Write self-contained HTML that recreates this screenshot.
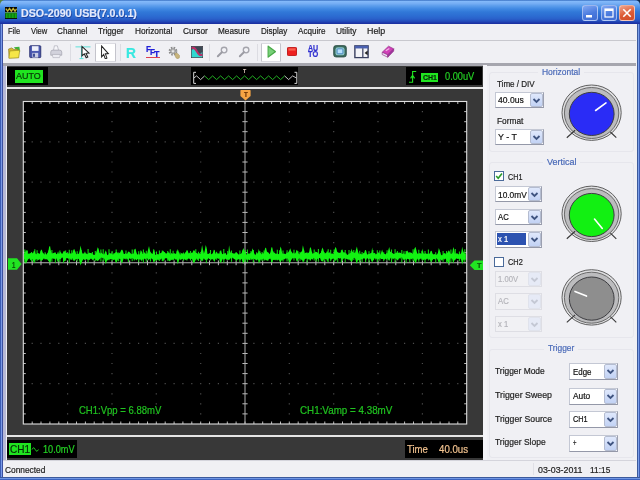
<!DOCTYPE html>
<html><head><meta charset="utf-8"><title>DSO-2090 USB(7.0.0.1)</title>
<style>
*{box-sizing:border-box;margin:0;padding:0}
html,body{width:640px;height:480px;overflow:hidden;background:#f0f0f4}
body{font-family:"Liberation Sans",sans-serif;font-size:9px;color:#222;position:relative;filter:blur(0.45px)}
.abs{position:absolute}
.t{position:absolute;white-space:pre;line-height:12px;display:block;transform-origin:0 0;-webkit-text-stroke:0.2px currentColor}
#frame{position:absolute;left:0;top:10px;width:640px;height:470px;background:#3c6dd8}
#title{position:absolute;left:0;top:0;width:640px;height:24px;border-radius:5px 5px 0 0;
 background:linear-gradient(to bottom,#2a62b8 0,#84bafa 1.2px,#76aef4 3.5px,#5a9cec 6px,#4088e2 9px,#3178d8 12px,#2c6cd2 16px,#2a60ca 19px,#2248b8 21.5px,#1c34a8 23px,#1a2e9c 24px)}
.wb{position:absolute;top:5px;width:16px;height:16px;border:1px solid rgba(230,238,255,0.55);border-radius:3px;background:linear-gradient(160deg,#82a8f2,#4a7ade 55%,#3f6cd2)}
.wb.close{background:linear-gradient(160deg,#f0a48c,#dc5a34 55%,#d04c28);border-color:rgba(255,235,225,0.6)}
.wb svg{position:absolute;left:0;top:0}
#client{position:absolute;left:2.9px;top:24px;width:633.9px;height:452.8px;background:#f0f0f4}
.hl{position:absolute;background:#fff;border:1px solid #c4c4cc;border-top-color:#dcdce2;border-bottom-color:#dcdce2;border-radius:1px}
.sep{position:absolute;width:1px;background:#dcdce2}
.dark{position:absolute;background:#383838}
.blk{position:absolute;background:#000}
.grp{position:absolute;border:1px solid #e6e6ec;border-radius:3px}
.combo{position:absolute;background:#fff;border:1px solid #c4c8d4;border-bottom-color:#9498a8;border-right-color:#9ca0b0}
.combo .cb{position:absolute;right:0;top:0;bottom:0;width:13px;background:linear-gradient(#dfe8fc,#c2d2f4);border:1px solid #b4bcd0;border-radius:2px}
.combo .cb svg{position:absolute;left:1px;top:4px}
.combo .cb path{stroke:#3f5480}
.combo.dis{background:#f1f1f4;border-color:#dedee4}
.combo.dis .cb{background:#e6eaf6;border-color:#e0e3ec}
.combo.dis .cb path{stroke:#c4c8d4}
.chk{position:absolute;width:10px;height:10px;border:1px solid #4a6a9a;background:#fff}
</style></head><body>
<div class="abs" style="left:0;top:0;width:8px;height:8px;background:#58803a"></div>
<div class="abs" style="left:632px;top:0;width:8px;height:8px;background:#0c2c54"></div>
<div id="frame"></div>
<div class="abs" style="left:0;top:20px;width:3px;height:460px;background:linear-gradient(to right,#3c5cb4 0,#3c5cb4 0.6px,#7a9ae8 0.8px,#7a9ae8 1.8px,#3c50a0 2px,#3c50a0 3px)"></div>
<div class="abs" style="left:636.8px;top:20px;width:3.2px;height:460px;background:linear-gradient(to right,#3c5a9c 0,#3c5a9c 0.9px,#7a9ee8 1.1px,#7a9ee8 2.3px,#3c5cb4 2.5px,#3c5cb4 3.2px)"></div>
<div class="abs" style="left:0;top:476.8px;width:640px;height:3.2px;background:linear-gradient(to bottom,#3c5a9c 0,#3c5a9c 0.9px,#7096e4 1.1px,#7096e4 2.3px,#3c64c0 2.5px,#3c64c0 3.2px)"></div>
<div id="title">
<svg class="abs" style="left:5px;top:6.8px" width="12.3" height="12" viewBox="0 0 12 12" preserveAspectRatio="none"><rect width="12" height="12" fill="#060606"/><path d="M0.8 1.6 L2.6 4.2 L4.4 1.4 L6.2 4.2 L8 1.4 L9.8 4.2 L11.3 1.8" stroke="#c4b430" stroke-width="1.3" fill="none"/><rect x="0" y="5.3" width="12" height="0.9" fill="#6cc48c"/><rect x="0.4" y="6.2" width="11.2" height="4.9" fill="#14a414"/><path d="M3 6.6V10.8M6 6.6V10.8M9 6.6V10.8" stroke="#0a6a0a" stroke-width="0.9"/></svg>
<span class="t" style="left:21.00px;top:7.33px;font-size:10.6px;transform:scaleX(1.0095);color:#e4eafc;font-weight:bold;text-shadow:0.7px 0.7px 0 #1d3f9a;">DSO-2090 USB(7.0.0.1)</span>
<div class="wb" style="left:582px"><svg width="14" height="14"><rect x="3" y="9" width="6" height="2.5" fill="#fff"/></svg></div>
<div class="wb" style="left:601px"><svg width="14" height="14"><rect x="3" y="3" width="8" height="8" fill="none" stroke="#fff" stroke-width="1.2"/><rect x="3" y="3" width="8" height="2" fill="#fff"/></svg></div>
<div class="wb close" style="left:619px"><svg width="14" height="14"><path d="M3.3 3.3 L10.7 10.7 M10.7 3.3 L3.3 10.7" stroke="#fff" stroke-width="1.6"/></svg></div>
</div>
<div id="client"></div>

<span class="t" style="left:7.80px;top:25.41px;font-size:9.2px;transform:scaleX(0.8169);color:#1c1c1c;">File</span>
<span class="t" style="left:30.50px;top:25.41px;font-size:9.2px;transform:scaleX(0.8241);color:#1c1c1c;">View</span>
<span class="t" style="left:57.00px;top:25.41px;font-size:9.2px;transform:scaleX(0.8871);color:#1c1c1c;">Channel</span>
<span class="t" style="left:98.10px;top:25.41px;font-size:9.2px;transform:scaleX(0.8960);color:#1c1c1c;">Trigger</span>
<span class="t" style="left:135.30px;top:25.41px;font-size:9.2px;transform:scaleX(0.9034);color:#1c1c1c;">Horizontal</span>
<span class="t" style="left:182.80px;top:25.41px;font-size:9.2px;transform:scaleX(0.9022);color:#1c1c1c;">Cursor</span>
<span class="t" style="left:218.30px;top:25.41px;font-size:9.2px;transform:scaleX(0.8914);color:#1c1c1c;">Measure</span>
<span class="t" style="left:260.50px;top:25.41px;font-size:9.2px;transform:scaleX(0.8749);color:#1c1c1c;">Display</span>
<span class="t" style="left:298.00px;top:25.41px;font-size:9.2px;transform:scaleX(0.8817);color:#1c1c1c;">Acquire</span>
<span class="t" style="left:336.30px;top:25.41px;font-size:9.2px;transform:scaleX(0.9114);color:#1c1c1c;">Utility</span>
<span class="t" style="left:366.70px;top:25.41px;font-size:9.2px;transform:scaleX(0.9627);color:#1c1c1c;">Help</span>

<div class="abs" style="left:3px;top:40px;width:633px;height:1px;background:#c8c8ce"></div>
<div class="abs" style="left:3px;top:63.4px;width:633px;height:2.2px;background:#a6a6ae"></div>
<div class="hl" style="left:95px;top:42.6px;width:20.5px;height:19.6px"></div>
<div class="hl" style="left:260.5px;top:42.6px;width:20.5px;height:19.6px"></div>
<div class="sep" style="left:70px;top:44px;height:17px"></div>
<div class="sep" style="left:119.5px;top:44px;height:17px"></div>
<div class="sep" style="left:209px;top:44px;height:17px"></div>
<div class="sep" style="left:257px;top:44px;height:17px"></div>

<svg class="abs" style="left:8px;top:45.5px" width="12.5" height="13" viewBox="0 0 17 17" preserveAspectRatio="none"><path d="M8 1.5 L15.5 1 L16.5 8 L12 6 Z" fill="#3cb43c"/><path d="M0.8 4 L5 2.5 L8 4.5 L13 4 L14 15 L1.5 15.5 Z" fill="#d8b830" stroke="#8a7a20" stroke-width="0.9"/><path d="M1.2 16 L2.5 6.5 L16 5.5 L14.5 15.5 Z" fill="#f6e648" stroke="#a09020" stroke-width="0.9"/></svg>
<svg class="abs" style="left:29.3px;top:45.3px" width="12.5" height="13.4" viewBox="0 0 17 17" preserveAspectRatio="none"><rect x="1" y="1" width="15" height="15" rx="1" fill="#4a58b0" stroke="#2a3070" stroke-width="1.2"/><rect x="4" y="1.5" width="9" height="6" fill="#eef0fa"/><rect x="4.5" y="10" width="8" height="6" fill="#c8cce4"/><rect x="5.5" y="11" width="2.6" height="4" fill="#3a4890"/></svg>
<svg class="abs" style="left:50px;top:45.3px" width="12.5" height="13.4" viewBox="0 0 17 17" preserveAspectRatio="none"><path d="M6 1 L10 1 L12 8 L4.5 8 Z" fill="#f6f6fa" stroke="#a4a4b0" stroke-width="0.8"/><path d="M1 9 Q1 6.5 4 6.5 L13 6.5 Q16 6.5 16 9 L16 13 L1 13 Z" fill="#d2d2dc" stroke="#9a9aa6" stroke-width="0.8"/><path d="M3 12 L14 12 L13 16 L4 16 Z" fill="#ececf2" stroke="#a4a4b0" stroke-width="0.7"/></svg>
<svg class="abs" style="left:75px;top:45px" width="16" height="15" viewBox="0 0 16 16" preserveAspectRatio="none"><path d="M0.5 2 L15.5 2 M6.5 2 L6.5 14.5 M4.5 14.5 L8.5 14.5" stroke="#58e0d8" stroke-width="1" fill="none"/><path d="M7 1.5 L7 11.5 L9.3 9.5 L11.2 13.6 L12.8 12.8 L11 8.9 L14 8.6 Z" fill="#fff" stroke="#222" stroke-width="1.1"/></svg>
<svg class="abs" style="left:100px;top:45px" width="11" height="14" viewBox="0 0 14 14" preserveAspectRatio="none"><path d="M2 1 L2 12 L4.7 9.6 L6.8 14 L8.8 13 L6.8 8.9 L10.5 8.6 Z" fill="#fff" stroke="#222" stroke-width="1.2"/></svg>
<span class="t" style="left:125.90px;top:46.67px;font-size:14.8px;transform:scaleX(0.9291);color:#38e8e0;font-weight:bold;">R</span>
<span class="t" style="left:146.20px;top:42.94px;font-size:9.4px;transform:scaleX(0.8720);color:#2020d8;font-weight:bold;">F</span>
<span class="t" style="left:150.40px;top:45.94px;font-size:9.4px;transform:scaleX(0.8720);color:#2020d8;font-weight:bold;">F</span>
<span class="t" style="left:154.20px;top:48.28px;font-size:9.0px;transform:scaleX(0.9836);color:#2020d8;font-weight:bold;">T</span>
<div class="abs" style="left:146px;top:57px;width:13.5px;height:1.4px;background:#e04050"></div>
<svg class="abs" style="left:168px;top:45.5px" width="13" height="13.5" viewBox="0 0 17 17" preserveAspectRatio="none"><circle cx="6.5" cy="6.5" r="4.4" fill="none" stroke="#8c8c8c" stroke-width="2.6" stroke-dasharray="2 1.5"/><circle cx="6.5" cy="6.5" r="3" fill="#c4c4c4" stroke="#7a7a7a" stroke-width="0.8"/><circle cx="6.5" cy="6.5" r="1.2" fill="#eeeef2"/><path d="M9 9 Q13 8 15 12 Q16 16 12 16 Q9 15 9 9Z" fill="#c8b47c" stroke="#a09060" stroke-width="0.6"/></svg>
<svg class="abs" style="left:190.5px;top:46.3px" width="12" height="12" viewBox="0 0 17 17" preserveAspectRatio="none"><rect x="0.5" y="0.5" width="16" height="16" fill="#3c4854" stroke="#3a3a44" stroke-width="1"/><path d="M1 6 Q5 1 8.5 8 T16 8 L16 16 L1 16 Z" fill="#30d8d0"/><path d="M1 3 Q5 1 8.5 8 T16 12" stroke="#b83068" stroke-width="3" fill="none"/></svg>
<svg class="abs" style="left:216px;top:45.7px" width="12.5" height="12.5" viewBox="0 0 17 17" preserveAspectRatio="none"><circle cx="11" cy="5.5" r="3.8" fill="#f2f2f6" stroke="#a4a4ac" stroke-width="1.8"/><path d="M8 8.5 L2.5 14" stroke="#9c9ca4" stroke-width="2.6" stroke-linecap="round"/></svg>
<svg class="abs" style="left:237.5px;top:45.7px" width="12.5" height="12.5" viewBox="0 0 17 17" preserveAspectRatio="none"><circle cx="11" cy="5.5" r="3.8" fill="#f2f2f6" stroke="#a4a4ac" stroke-width="1.8"/><path d="M8 8.5 L2.5 14" stroke="#9c9ca4" stroke-width="2.6" stroke-linecap="round"/></svg>
<svg class="abs" style="left:266.5px;top:45.3px" width="9.5" height="13.3" viewBox="0 0 14 14" preserveAspectRatio="none"><path d="M1.5 1.2 L12.5 7 L1.5 12.8 Z" fill="#78d078" stroke="#48a848" stroke-width="1.4" stroke-linejoin="round"/></svg>
<svg class="abs" style="left:287px;top:47px" width="10" height="9" viewBox="0 0 10 10" preserveAspectRatio="none"><rect x="0.5" y="0.5" width="9" height="9" rx="0.8" fill="#ee2020" stroke="#c01818" stroke-width="1"/><rect x="1.5" y="1.5" width="7" height="2.5" fill="#f86050"/></svg>
<span class="t" style="left:308.20px;top:42.86px;font-size:8.2px;transform:scaleX(0.8608);color:#3030d0;font-weight:bold;">AU</span>
<span class="t" style="left:308.20px;top:49.36px;font-size:8.2px;transform:scaleX(0.9080);color:#3030d0;font-weight:bold;">TO</span>
<svg class="abs" style="left:333px;top:45.3px" width="14" height="12.6" viewBox="0 0 17 17" preserveAspectRatio="none"><rect x="0.8" y="0.8" width="15.4" height="15.4" rx="3" fill="#3a6a5c" stroke="#2a4a44" stroke-width="1"/><rect x="3" y="3" width="11" height="11" rx="3" fill="#8cc4c8"/><rect x="5" y="5.2" width="7" height="6.6" rx="1" fill="#b8e0fc" stroke="#3a7ab8" stroke-width="1"/></svg>
<svg class="abs" style="left:354px;top:45.2px" width="15" height="13.4" viewBox="0 0 17 17" preserveAspectRatio="none"><rect x="1" y="1" width="15" height="15" fill="#f4f4f8" stroke="#3a4060" stroke-width="1.6"/><rect x="1" y="1" width="15" height="3.4" fill="#4a60b0"/><path d="M10 4 L10 16" stroke="#3a4060" stroke-width="1.4"/><path d="M15.5 7 L12 10 L15.5 13Z" fill="#222"/></svg>
<svg class="abs" style="left:381px;top:45.3px" width="13.5" height="13" viewBox="0 0 17 17" preserveAspectRatio="none"><path d="M1.5 9.5 L9.5 1.5 L16 5 L8.5 13 Z" fill="#d040b8" stroke="#8a2880" stroke-width="0.8"/><path d="M1.5 9.5 L1.5 12.5 L8.5 16 L8.5 13 Z" fill="#ece4f4" stroke="#8a2880" stroke-width="0.8"/><path d="M8.5 13 L16 5 L16 8 L8.5 16 Z" fill="#a030a0" stroke="#8a2880" stroke-width="0.8"/><path d="M6 7.5 L10.5 4.5" stroke="#f4b8e8" stroke-width="1.4"/></svg>

<div class="abs" style="left:2.9px;top:65.6px;width:3.6px;height:394px;background:#b6b8d6"></div>
<div class="abs" style="left:483px;top:65px;width:4px;height:395px;background:#f4f4f8"></div>
<div class="dark" style="left:6.5px;top:66px;width:476.5px;height:393.5px"></div>
<div class="abs" style="left:6.5px;top:87.1px;width:476.5px;height:1.8px;background:#e6e6e6"></div>
<div class="abs" style="left:6.5px;top:435.4px;width:476.5px;height:1.8px;background:#e6e6e6"></div>
<div class="blk" style="left:7px;top:67px;width:41px;height:18px"></div>
<div class="abs" style="left:15px;top:70px;width:28px;height:12.5px;background:#20e420"></div>
<div class="blk" style="left:191.3px;top:66.8px;width:107.2px;height:18.2px"></div>
<div class="blk" style="left:406px;top:67.3px;width:76px;height:18px"></div>
<div class="abs" style="left:421px;top:73px;width:17px;height:9px;background:#20e420"></div>
<div class="blk" style="left:6.5px;top:439.8px;width:70.5px;height:17.8px"></div>
<div class="abs" style="left:9px;top:442.8px;width:21.8px;height:12.3px;background:#20e420"></div>
<div class="blk" style="left:405px;top:439.8px;width:77.6px;height:17.8px"></div>

<span class="t" style="left:16.30px;top:70.37px;font-size:9.9px;transform:scaleX(0.9076);color:#083408;">AUTO</span>
<span class="t" style="left:422.50px;top:72.10px;font-size:7.5px;transform:scaleX(0.9333);color:#062806;font-weight:bold;">CH1</span>
<span class="t" style="left:444.60px;top:71.27px;font-size:10.2px;transform:scaleX(0.9062);color:#24d024;">0.00uV</span>
<span class="t" style="left:10.20px;top:443.33px;font-size:10.6px;transform:scaleX(0.9481);color:#062c06;">CH1</span>
<span class="t" style="left:42.60px;top:443.33px;font-size:10.6px;transform:scaleX(0.8654);color:#24d424;">10.0mV</span>
<span class="t" style="left:407.30px;top:443.43px;font-size:10.6px;transform:scaleX(0.9024);color:#f4c490;">Time</span>
<span class="t" style="left:439.10px;top:443.43px;font-size:10.6px;transform:scaleX(0.9136);color:#f4c490;">40.0us</span>
<span class="t" style="left:243.20px;top:64.79px;font-size:5.8px;transform:scaleX(0.9045);color:#f0dcd0;">T</span>
<svg class="abs" style="left:0;top:0" width="640" height="480" viewBox="0 0 640 480">
<rect x="23.3" y="101.5" width="443.4" height="322.5" fill="#000"/>
<path d="M67.0 111.6h1.2M67.0 121.7h1.2M67.0 131.7h1.2M67.0 141.8h1.2M67.0 151.9h1.2M67.0 162.0h1.2M67.0 172.0h1.2M67.0 182.1h1.2M67.0 192.2h1.2M67.0 202.3h1.2M67.0 212.4h1.2M67.0 222.4h1.2M67.0 232.5h1.2M67.0 242.6h1.2M67.0 252.7h1.2M67.0 262.8h1.2M67.0 272.8h1.2M67.0 282.9h1.2M67.0 293.0h1.2M67.0 303.1h1.2M67.0 313.1h1.2M67.0 323.2h1.2M67.0 333.3h1.2M67.0 343.4h1.2M67.0 353.5h1.2M67.0 363.5h1.2M67.0 373.6h1.2M67.0 383.7h1.2M67.0 393.8h1.2M67.0 403.8h1.2M67.0 413.9h1.2M111.4 111.6h1.2M111.4 121.7h1.2M111.4 131.7h1.2M111.4 141.8h1.2M111.4 151.9h1.2M111.4 162.0h1.2M111.4 172.0h1.2M111.4 182.1h1.2M111.4 192.2h1.2M111.4 202.3h1.2M111.4 212.4h1.2M111.4 222.4h1.2M111.4 232.5h1.2M111.4 242.6h1.2M111.4 252.7h1.2M111.4 262.8h1.2M111.4 272.8h1.2M111.4 282.9h1.2M111.4 293.0h1.2M111.4 303.1h1.2M111.4 313.1h1.2M111.4 323.2h1.2M111.4 333.3h1.2M111.4 343.4h1.2M111.4 353.5h1.2M111.4 363.5h1.2M111.4 373.6h1.2M111.4 383.7h1.2M111.4 393.8h1.2M111.4 403.8h1.2M111.4 413.9h1.2M155.7 111.6h1.2M155.7 121.7h1.2M155.7 131.7h1.2M155.7 141.8h1.2M155.7 151.9h1.2M155.7 162.0h1.2M155.7 172.0h1.2M155.7 182.1h1.2M155.7 192.2h1.2M155.7 202.3h1.2M155.7 212.4h1.2M155.7 222.4h1.2M155.7 232.5h1.2M155.7 242.6h1.2M155.7 252.7h1.2M155.7 262.8h1.2M155.7 272.8h1.2M155.7 282.9h1.2M155.7 293.0h1.2M155.7 303.1h1.2M155.7 313.1h1.2M155.7 323.2h1.2M155.7 333.3h1.2M155.7 343.4h1.2M155.7 353.5h1.2M155.7 363.5h1.2M155.7 373.6h1.2M155.7 383.7h1.2M155.7 393.8h1.2M155.7 403.8h1.2M155.7 413.9h1.2M200.1 111.6h1.2M200.1 121.7h1.2M200.1 131.7h1.2M200.1 141.8h1.2M200.1 151.9h1.2M200.1 162.0h1.2M200.1 172.0h1.2M200.1 182.1h1.2M200.1 192.2h1.2M200.1 202.3h1.2M200.1 212.4h1.2M200.1 222.4h1.2M200.1 232.5h1.2M200.1 242.6h1.2M200.1 252.7h1.2M200.1 262.8h1.2M200.1 272.8h1.2M200.1 282.9h1.2M200.1 293.0h1.2M200.1 303.1h1.2M200.1 313.1h1.2M200.1 323.2h1.2M200.1 333.3h1.2M200.1 343.4h1.2M200.1 353.5h1.2M200.1 363.5h1.2M200.1 373.6h1.2M200.1 383.7h1.2M200.1 393.8h1.2M200.1 403.8h1.2M200.1 413.9h1.2M288.7 111.6h1.2M288.7 121.7h1.2M288.7 131.7h1.2M288.7 141.8h1.2M288.7 151.9h1.2M288.7 162.0h1.2M288.7 172.0h1.2M288.7 182.1h1.2M288.7 192.2h1.2M288.7 202.3h1.2M288.7 212.4h1.2M288.7 222.4h1.2M288.7 232.5h1.2M288.7 242.6h1.2M288.7 252.7h1.2M288.7 262.8h1.2M288.7 272.8h1.2M288.7 282.9h1.2M288.7 293.0h1.2M288.7 303.1h1.2M288.7 313.1h1.2M288.7 323.2h1.2M288.7 333.3h1.2M288.7 343.4h1.2M288.7 353.5h1.2M288.7 363.5h1.2M288.7 373.6h1.2M288.7 383.7h1.2M288.7 393.8h1.2M288.7 403.8h1.2M288.7 413.9h1.2M333.1 111.6h1.2M333.1 121.7h1.2M333.1 131.7h1.2M333.1 141.8h1.2M333.1 151.9h1.2M333.1 162.0h1.2M333.1 172.0h1.2M333.1 182.1h1.2M333.1 192.2h1.2M333.1 202.3h1.2M333.1 212.4h1.2M333.1 222.4h1.2M333.1 232.5h1.2M333.1 242.6h1.2M333.1 252.7h1.2M333.1 262.8h1.2M333.1 272.8h1.2M333.1 282.9h1.2M333.1 293.0h1.2M333.1 303.1h1.2M333.1 313.1h1.2M333.1 323.2h1.2M333.1 333.3h1.2M333.1 343.4h1.2M333.1 353.5h1.2M333.1 363.5h1.2M333.1 373.6h1.2M333.1 383.7h1.2M333.1 393.8h1.2M333.1 403.8h1.2M333.1 413.9h1.2M377.4 111.6h1.2M377.4 121.7h1.2M377.4 131.7h1.2M377.4 141.8h1.2M377.4 151.9h1.2M377.4 162.0h1.2M377.4 172.0h1.2M377.4 182.1h1.2M377.4 192.2h1.2M377.4 202.3h1.2M377.4 212.4h1.2M377.4 222.4h1.2M377.4 232.5h1.2M377.4 242.6h1.2M377.4 252.7h1.2M377.4 262.8h1.2M377.4 272.8h1.2M377.4 282.9h1.2M377.4 293.0h1.2M377.4 303.1h1.2M377.4 313.1h1.2M377.4 323.2h1.2M377.4 333.3h1.2M377.4 343.4h1.2M377.4 353.5h1.2M377.4 363.5h1.2M377.4 373.6h1.2M377.4 383.7h1.2M377.4 393.8h1.2M377.4 403.8h1.2M377.4 413.9h1.2M421.8 111.6h1.2M421.8 121.7h1.2M421.8 131.7h1.2M421.8 141.8h1.2M421.8 151.9h1.2M421.8 162.0h1.2M421.8 172.0h1.2M421.8 182.1h1.2M421.8 192.2h1.2M421.8 202.3h1.2M421.8 212.4h1.2M421.8 222.4h1.2M421.8 232.5h1.2M421.8 242.6h1.2M421.8 252.7h1.2M421.8 262.8h1.2M421.8 272.8h1.2M421.8 282.9h1.2M421.8 293.0h1.2M421.8 303.1h1.2M421.8 313.1h1.2M421.8 323.2h1.2M421.8 333.3h1.2M421.8 343.4h1.2M421.8 353.5h1.2M421.8 363.5h1.2M421.8 373.6h1.2M421.8 383.7h1.2M421.8 393.8h1.2M421.8 403.8h1.2M421.8 413.9h1.2M31.6 141.8h1.2M40.4 141.8h1.2M49.3 141.8h1.2M58.2 141.8h1.2M67.0 141.8h1.2M75.9 141.8h1.2M84.8 141.8h1.2M93.6 141.8h1.2M102.5 141.8h1.2M111.4 141.8h1.2M120.2 141.8h1.2M129.1 141.8h1.2M138.0 141.8h1.2M146.9 141.8h1.2M155.7 141.8h1.2M164.6 141.8h1.2M173.5 141.8h1.2M182.3 141.8h1.2M191.2 141.8h1.2M200.1 141.8h1.2M208.9 141.8h1.2M217.8 141.8h1.2M226.7 141.8h1.2M235.5 141.8h1.2M244.4 141.8h1.2M253.3 141.8h1.2M262.1 141.8h1.2M271.0 141.8h1.2M279.9 141.8h1.2M288.7 141.8h1.2M297.6 141.8h1.2M306.5 141.8h1.2M315.3 141.8h1.2M324.2 141.8h1.2M333.1 141.8h1.2M341.9 141.8h1.2M350.8 141.8h1.2M359.7 141.8h1.2M368.6 141.8h1.2M377.4 141.8h1.2M386.3 141.8h1.2M395.2 141.8h1.2M404.0 141.8h1.2M412.9 141.8h1.2M421.8 141.8h1.2M430.6 141.8h1.2M439.5 141.8h1.2M448.4 141.8h1.2M457.2 141.8h1.2M31.6 182.1h1.2M40.4 182.1h1.2M49.3 182.1h1.2M58.2 182.1h1.2M67.0 182.1h1.2M75.9 182.1h1.2M84.8 182.1h1.2M93.6 182.1h1.2M102.5 182.1h1.2M111.4 182.1h1.2M120.2 182.1h1.2M129.1 182.1h1.2M138.0 182.1h1.2M146.9 182.1h1.2M155.7 182.1h1.2M164.6 182.1h1.2M173.5 182.1h1.2M182.3 182.1h1.2M191.2 182.1h1.2M200.1 182.1h1.2M208.9 182.1h1.2M217.8 182.1h1.2M226.7 182.1h1.2M235.5 182.1h1.2M244.4 182.1h1.2M253.3 182.1h1.2M262.1 182.1h1.2M271.0 182.1h1.2M279.9 182.1h1.2M288.7 182.1h1.2M297.6 182.1h1.2M306.5 182.1h1.2M315.3 182.1h1.2M324.2 182.1h1.2M333.1 182.1h1.2M341.9 182.1h1.2M350.8 182.1h1.2M359.7 182.1h1.2M368.6 182.1h1.2M377.4 182.1h1.2M386.3 182.1h1.2M395.2 182.1h1.2M404.0 182.1h1.2M412.9 182.1h1.2M421.8 182.1h1.2M430.6 182.1h1.2M439.5 182.1h1.2M448.4 182.1h1.2M457.2 182.1h1.2M31.6 222.4h1.2M40.4 222.4h1.2M49.3 222.4h1.2M58.2 222.4h1.2M67.0 222.4h1.2M75.9 222.4h1.2M84.8 222.4h1.2M93.6 222.4h1.2M102.5 222.4h1.2M111.4 222.4h1.2M120.2 222.4h1.2M129.1 222.4h1.2M138.0 222.4h1.2M146.9 222.4h1.2M155.7 222.4h1.2M164.6 222.4h1.2M173.5 222.4h1.2M182.3 222.4h1.2M191.2 222.4h1.2M200.1 222.4h1.2M208.9 222.4h1.2M217.8 222.4h1.2M226.7 222.4h1.2M235.5 222.4h1.2M244.4 222.4h1.2M253.3 222.4h1.2M262.1 222.4h1.2M271.0 222.4h1.2M279.9 222.4h1.2M288.7 222.4h1.2M297.6 222.4h1.2M306.5 222.4h1.2M315.3 222.4h1.2M324.2 222.4h1.2M333.1 222.4h1.2M341.9 222.4h1.2M350.8 222.4h1.2M359.7 222.4h1.2M368.6 222.4h1.2M377.4 222.4h1.2M386.3 222.4h1.2M395.2 222.4h1.2M404.0 222.4h1.2M412.9 222.4h1.2M421.8 222.4h1.2M430.6 222.4h1.2M439.5 222.4h1.2M448.4 222.4h1.2M457.2 222.4h1.2M31.6 303.1h1.2M40.4 303.1h1.2M49.3 303.1h1.2M58.2 303.1h1.2M67.0 303.1h1.2M75.9 303.1h1.2M84.8 303.1h1.2M93.6 303.1h1.2M102.5 303.1h1.2M111.4 303.1h1.2M120.2 303.1h1.2M129.1 303.1h1.2M138.0 303.1h1.2M146.9 303.1h1.2M155.7 303.1h1.2M164.6 303.1h1.2M173.5 303.1h1.2M182.3 303.1h1.2M191.2 303.1h1.2M200.1 303.1h1.2M208.9 303.1h1.2M217.8 303.1h1.2M226.7 303.1h1.2M235.5 303.1h1.2M244.4 303.1h1.2M253.3 303.1h1.2M262.1 303.1h1.2M271.0 303.1h1.2M279.9 303.1h1.2M288.7 303.1h1.2M297.6 303.1h1.2M306.5 303.1h1.2M315.3 303.1h1.2M324.2 303.1h1.2M333.1 303.1h1.2M341.9 303.1h1.2M350.8 303.1h1.2M359.7 303.1h1.2M368.6 303.1h1.2M377.4 303.1h1.2M386.3 303.1h1.2M395.2 303.1h1.2M404.0 303.1h1.2M412.9 303.1h1.2M421.8 303.1h1.2M430.6 303.1h1.2M439.5 303.1h1.2M448.4 303.1h1.2M457.2 303.1h1.2M31.6 343.4h1.2M40.4 343.4h1.2M49.3 343.4h1.2M58.2 343.4h1.2M67.0 343.4h1.2M75.9 343.4h1.2M84.8 343.4h1.2M93.6 343.4h1.2M102.5 343.4h1.2M111.4 343.4h1.2M120.2 343.4h1.2M129.1 343.4h1.2M138.0 343.4h1.2M146.9 343.4h1.2M155.7 343.4h1.2M164.6 343.4h1.2M173.5 343.4h1.2M182.3 343.4h1.2M191.2 343.4h1.2M200.1 343.4h1.2M208.9 343.4h1.2M217.8 343.4h1.2M226.7 343.4h1.2M235.5 343.4h1.2M244.4 343.4h1.2M253.3 343.4h1.2M262.1 343.4h1.2M271.0 343.4h1.2M279.9 343.4h1.2M288.7 343.4h1.2M297.6 343.4h1.2M306.5 343.4h1.2M315.3 343.4h1.2M324.2 343.4h1.2M333.1 343.4h1.2M341.9 343.4h1.2M350.8 343.4h1.2M359.7 343.4h1.2M368.6 343.4h1.2M377.4 343.4h1.2M386.3 343.4h1.2M395.2 343.4h1.2M404.0 343.4h1.2M412.9 343.4h1.2M421.8 343.4h1.2M430.6 343.4h1.2M439.5 343.4h1.2M448.4 343.4h1.2M457.2 343.4h1.2M31.6 383.7h1.2M40.4 383.7h1.2M49.3 383.7h1.2M58.2 383.7h1.2M67.0 383.7h1.2M75.9 383.7h1.2M84.8 383.7h1.2M93.6 383.7h1.2M102.5 383.7h1.2M111.4 383.7h1.2M120.2 383.7h1.2M129.1 383.7h1.2M138.0 383.7h1.2M146.9 383.7h1.2M155.7 383.7h1.2M164.6 383.7h1.2M173.5 383.7h1.2M182.3 383.7h1.2M191.2 383.7h1.2M200.1 383.7h1.2M208.9 383.7h1.2M217.8 383.7h1.2M226.7 383.7h1.2M235.5 383.7h1.2M244.4 383.7h1.2M253.3 383.7h1.2M262.1 383.7h1.2M271.0 383.7h1.2M279.9 383.7h1.2M288.7 383.7h1.2M297.6 383.7h1.2M306.5 383.7h1.2M315.3 383.7h1.2M324.2 383.7h1.2M333.1 383.7h1.2M341.9 383.7h1.2M350.8 383.7h1.2M359.7 383.7h1.2M368.6 383.7h1.2M377.4 383.7h1.2M386.3 383.7h1.2M395.2 383.7h1.2M404.0 383.7h1.2M412.9 383.7h1.2M421.8 383.7h1.2M430.6 383.7h1.2M439.5 383.7h1.2M448.4 383.7h1.2M457.2 383.7h1.2" stroke="#4c4c4c" stroke-width="1.2" fill="none"/>
<path d="M32.2 101.5v2.5M32.2 424.0v-2.5M32.2 260.4v4.8M41.0 101.5v2.5M41.0 424.0v-2.5M41.0 260.4v4.8M49.9 101.5v2.5M49.9 424.0v-2.5M49.9 260.4v4.8M58.8 101.5v2.5M58.8 424.0v-2.5M58.8 260.4v4.8M67.6 101.5v2.5M67.6 424.0v-2.5M67.6 260.4v4.8M76.5 101.5v2.5M76.5 424.0v-2.5M76.5 260.4v4.8M85.4 101.5v2.5M85.4 424.0v-2.5M85.4 260.4v4.8M94.2 101.5v2.5M94.2 424.0v-2.5M94.2 260.4v4.8M103.1 101.5v2.5M103.1 424.0v-2.5M103.1 260.4v4.8M112.0 101.5v2.5M112.0 424.0v-2.5M112.0 260.4v4.8M120.8 101.5v2.5M120.8 424.0v-2.5M120.8 260.4v4.8M129.7 101.5v2.5M129.7 424.0v-2.5M129.7 260.4v4.8M138.6 101.5v2.5M138.6 424.0v-2.5M138.6 260.4v4.8M147.5 101.5v2.5M147.5 424.0v-2.5M147.5 260.4v4.8M156.3 101.5v2.5M156.3 424.0v-2.5M156.3 260.4v4.8M165.2 101.5v2.5M165.2 424.0v-2.5M165.2 260.4v4.8M174.1 101.5v2.5M174.1 424.0v-2.5M174.1 260.4v4.8M182.9 101.5v2.5M182.9 424.0v-2.5M182.9 260.4v4.8M191.8 101.5v2.5M191.8 424.0v-2.5M191.8 260.4v4.8M200.7 101.5v2.5M200.7 424.0v-2.5M200.7 260.4v4.8M209.5 101.5v2.5M209.5 424.0v-2.5M209.5 260.4v4.8M218.4 101.5v2.5M218.4 424.0v-2.5M218.4 260.4v4.8M227.3 101.5v2.5M227.3 424.0v-2.5M227.3 260.4v4.8M236.1 101.5v2.5M236.1 424.0v-2.5M236.1 260.4v4.8M245.0 101.5v2.5M245.0 424.0v-2.5M245.0 260.4v4.8M253.9 101.5v2.5M253.9 424.0v-2.5M253.9 260.4v4.8M262.7 101.5v2.5M262.7 424.0v-2.5M262.7 260.4v4.8M271.6 101.5v2.5M271.6 424.0v-2.5M271.6 260.4v4.8M280.5 101.5v2.5M280.5 424.0v-2.5M280.5 260.4v4.8M289.3 101.5v2.5M289.3 424.0v-2.5M289.3 260.4v4.8M298.2 101.5v2.5M298.2 424.0v-2.5M298.2 260.4v4.8M307.1 101.5v2.5M307.1 424.0v-2.5M307.1 260.4v4.8M315.9 101.5v2.5M315.9 424.0v-2.5M315.9 260.4v4.8M324.8 101.5v2.5M324.8 424.0v-2.5M324.8 260.4v4.8M333.7 101.5v2.5M333.7 424.0v-2.5M333.7 260.4v4.8M342.5 101.5v2.5M342.5 424.0v-2.5M342.5 260.4v4.8M351.4 101.5v2.5M351.4 424.0v-2.5M351.4 260.4v4.8M360.3 101.5v2.5M360.3 424.0v-2.5M360.3 260.4v4.8M369.2 101.5v2.5M369.2 424.0v-2.5M369.2 260.4v4.8M378.0 101.5v2.5M378.0 424.0v-2.5M378.0 260.4v4.8M386.9 101.5v2.5M386.9 424.0v-2.5M386.9 260.4v4.8M395.8 101.5v2.5M395.8 424.0v-2.5M395.8 260.4v4.8M404.6 101.5v2.5M404.6 424.0v-2.5M404.6 260.4v4.8M413.5 101.5v2.5M413.5 424.0v-2.5M413.5 260.4v4.8M422.4 101.5v2.5M422.4 424.0v-2.5M422.4 260.4v4.8M431.2 101.5v2.5M431.2 424.0v-2.5M431.2 260.4v4.8M440.1 101.5v2.5M440.1 424.0v-2.5M440.1 260.4v4.8M449.0 101.5v2.5M449.0 424.0v-2.5M449.0 260.4v4.8M457.8 101.5v2.5M457.8 424.0v-2.5M457.8 260.4v4.8M23.3 111.6h2.5M466.7 111.6h-2.5M242.4 111.6h5.2M23.3 121.7h2.5M466.7 121.7h-2.5M242.4 121.7h5.2M23.3 131.7h2.5M466.7 131.7h-2.5M242.4 131.7h5.2M23.3 141.8h2.5M466.7 141.8h-2.5M242.4 141.8h5.2M23.3 151.9h2.5M466.7 151.9h-2.5M242.4 151.9h5.2M23.3 162.0h2.5M466.7 162.0h-2.5M242.4 162.0h5.2M23.3 172.0h2.5M466.7 172.0h-2.5M242.4 172.0h5.2M23.3 182.1h2.5M466.7 182.1h-2.5M242.4 182.1h5.2M23.3 192.2h2.5M466.7 192.2h-2.5M242.4 192.2h5.2M23.3 202.3h2.5M466.7 202.3h-2.5M242.4 202.3h5.2M23.3 212.4h2.5M466.7 212.4h-2.5M242.4 212.4h5.2M23.3 222.4h2.5M466.7 222.4h-2.5M242.4 222.4h5.2M23.3 232.5h2.5M466.7 232.5h-2.5M242.4 232.5h5.2M23.3 242.6h2.5M466.7 242.6h-2.5M242.4 242.6h5.2M23.3 252.7h2.5M466.7 252.7h-2.5M242.4 252.7h5.2M23.3 262.8h2.5M466.7 262.8h-2.5M242.4 262.8h5.2M23.3 272.8h2.5M466.7 272.8h-2.5M242.4 272.8h5.2M23.3 282.9h2.5M466.7 282.9h-2.5M242.4 282.9h5.2M23.3 293.0h2.5M466.7 293.0h-2.5M242.4 293.0h5.2M23.3 303.1h2.5M466.7 303.1h-2.5M242.4 303.1h5.2M23.3 313.1h2.5M466.7 313.1h-2.5M242.4 313.1h5.2M23.3 323.2h2.5M466.7 323.2h-2.5M242.4 323.2h5.2M23.3 333.3h2.5M466.7 333.3h-2.5M242.4 333.3h5.2M23.3 343.4h2.5M466.7 343.4h-2.5M242.4 343.4h5.2M23.3 353.5h2.5M466.7 353.5h-2.5M242.4 353.5h5.2M23.3 363.5h2.5M466.7 363.5h-2.5M242.4 363.5h5.2M23.3 373.6h2.5M466.7 373.6h-2.5M242.4 373.6h5.2M23.3 383.7h2.5M466.7 383.7h-2.5M242.4 383.7h5.2M23.3 393.8h2.5M466.7 393.8h-2.5M242.4 393.8h5.2M23.3 403.8h2.5M466.7 403.8h-2.5M242.4 403.8h5.2M23.3 413.9h2.5M466.7 413.9h-2.5M242.4 413.9h5.2" stroke="#bcbcbc" stroke-width="1" fill="none"/>
<rect x="23.3" y="101.5" width="443.4" height="322.5" fill="none" stroke="#dedede" stroke-width="1.1"/>
<path d="M245.0 101.5V424.0" stroke="#b0b0b0" stroke-width="1" fill="none"/><path d="M23.3 262.75H466.7" stroke="#b4b4b4" stroke-width="1" fill="none"/>
<path d="M24.8 249.5V262.5M27.4 250.5V260.6M31.5 252.0V261.4M34.8 249.3V262.5M37.1 250.3V260.7M40.9 251.3V260.6M45.1 252.3V259.6M48.7 250.6V260.7M51.9 250.1V261.7M55.4 252.4V262.7M59.9 250.4V262.2M63.5 251.5V262.8M65.6 250.6V260.8M69.3 249.8V262.8M71.8 250.3V260.0M74.8 251.6V259.8M77.2 251.3V261.6M81.1 249.9V262.2M84.9 251.7V259.9M88.1 249.1V262.3M92.4 252.1V259.6M95.3 250.9V261.3M97.6 251.8V260.5M100.9 249.4V261.4M103.2 249.3V261.2M105.9 251.7V260.3M109.0 249.2V260.2M112.1 251.0V261.0M116.2 249.4V262.3M118.6 252.4V261.2M121.6 251.1V262.4M126.0 250.4V259.5M128.4 251.9V261.9M132.2 249.5V261.3M134.3 249.4V260.5M138.7 251.3V262.3M140.8 250.5V259.8M143.4 249.4V262.5M146.3 250.7V261.7M150.5 252.3V261.4M153.7 252.2V260.8M156.5 251.6V260.4M159.4 250.5V261.1M162.3 250.5V261.0M164.4 251.9V259.7M167.7 250.9V260.8M170.3 249.3V260.7M173.1 250.7V260.3M177.0 250.7V259.5M180.0 252.4V259.5M183.5 252.4V260.7M186.9 250.3V260.5M190.5 251.1V260.5M193.7 250.8V262.0M195.8 249.3V260.3M198.5 251.8V260.9M202.7 250.4V260.4M206.4 249.3V262.7M210.5 250.1V260.5M214.5 251.8V261.6M216.6 251.7V259.7M220.2 250.9V262.6M223.8 249.1V262.6M227.7 251.0V259.5M231.5 250.5V261.7M236.0 252.2V259.7M239.9 250.5V262.0M242.9 250.6V260.9M245.2 250.1V261.9M247.4 249.4V262.3M251.0 250.9V259.9M253.3 250.1V262.6M256.7 252.2V260.2M259.8 250.9V262.3M262.1 252.1V261.1M264.1 250.5V260.7M267.8 252.2V261.1M271.6 250.4V262.1M273.8 251.6V260.0M277.3 249.7V260.6M279.7 250.2V261.5M283.0 250.4V261.4M287.1 250.3V261.4M290.3 252.4V260.6M294.0 249.8V260.4M297.9 251.0V260.3M300.0 251.9V260.7M303.8 250.5V261.5M307.2 252.4V262.5M310.4 250.7V260.3M314.2 249.4V260.5M318.4 249.1V261.8M321.8 250.9V260.6M324.2 252.3V262.0M328.2 249.3V262.1M330.7 249.7V261.3M334.2 249.4V262.0M337.7 252.1V262.5M341.4 250.3V262.6M345.2 250.0V262.3M349.0 249.9V260.3M351.1 250.9V260.3M353.8 249.9V259.9M357.0 250.0V260.4M359.7 250.8V262.4M362.1 252.0V262.3M365.6 250.9V261.9M369.0 251.3V262.5M372.9 249.9V259.7M377.3 250.3V262.1M379.8 250.6V260.7M383.7 252.3V261.2M387.1 250.2V260.3M391.5 249.4V262.6M395.1 249.3V262.5M397.4 251.0V259.9M401.8 250.1V262.4M404.0 251.3V259.7M406.1 251.0V262.7M409.8 252.0V262.1M413.1 249.3V261.2M415.5 250.8V260.7M418.8 249.7V261.8M421.8 250.7V259.8M425.0 251.0V262.7M428.4 249.5V260.5M431.3 251.5V262.6M435.7 252.3V262.6M439.9 252.3V259.6M443.1 251.1V261.8M446.6 251.1V262.6M448.8 250.8V262.7M450.9 249.4V262.4M455.3 249.1V259.6M459.4 251.4V261.2M462.8 251.7V262.2M464.8 249.2V262.1" stroke="#18e818" stroke-width="1.1" fill="none" opacity="0.9"/><path d="M23.9,253.9 L24.8,253.5 L25.7,250.7 L26.6,249.9 L27.5,254.2 L28.4,253.5 L29.3,253.8 L30.2,253.1 L31.1,253.3 L32.0,252.6 L32.9,253.5 L33.8,250.9 L34.7,250.9 L35.6,253.7 L36.5,254.2 L37.4,253.1 L38.3,253.1 L39.2,254.0 L40.1,253.1 L41.0,249.6 L41.9,250.0 L42.8,252.7 L43.7,253.4 L44.6,254.7 L45.5,252.9 L46.4,254.8 L47.3,253.0 L48.2,252.3 L49.1,246.9 L50.0,245.8 L50.9,251.1 L51.8,253.4 L52.7,253.3 L53.6,253.1 L54.5,252.4 L55.4,253.3 L56.3,254.2 L57.2,253.7 L58.1,251.2 L59.0,254.3 L59.9,252.5 L60.8,252.1 L61.7,253.7 L62.6,253.5 L63.5,252.6 L64.4,250.4 L65.3,253.0 L66.2,252.5 L67.1,253.2 L68.0,252.5 L68.9,253.9 L69.8,252.6 L70.7,253.8 L71.6,253.6 L72.5,253.0 L73.4,249.8 L74.3,248.9 L75.2,251.5 L76.1,254.0 L77.0,254.2 L77.9,253.6 L78.8,253.9 L79.7,250.6 L80.6,245.5 L81.5,249.9 L82.4,253.4 L83.3,253.5 L84.2,253.2 L85.1,253.0 L86.0,253.4 L86.9,253.8 L87.8,254.3 L88.7,252.8 L89.6,252.8 L90.5,252.9 L91.4,252.9 L92.3,254.2 L93.2,254.4 L94.1,254.9 L95.0,254.7 L95.9,253.2 L96.8,250.6 L97.7,247.2 L98.6,248.8 L99.5,252.7 L100.4,253.7 L101.3,252.5 L102.2,253.5 L103.1,253.9 L104.0,254.7 L104.9,252.6 L105.8,250.3 L106.7,253.8 L107.6,255.3 L108.5,254.4 L109.4,252.8 L110.3,253.4 L111.2,253.0 L112.1,254.1 L113.0,254.8 L113.9,252.7 L114.8,253.6 L115.7,252.0 L116.6,251.9 L117.5,252.4 L118.4,254.6 L119.3,252.9 L120.2,252.4 L121.1,250.3 L122.0,249.5 L122.9,250.8 L123.8,254.1 L124.7,254.0 L125.6,252.9 L126.5,253.9 L127.4,253.4 L128.3,251.5 L129.2,251.8 L130.1,252.7 L131.0,253.8 L131.9,254.2 L132.8,253.8 L133.7,253.4 L134.6,249.4 L135.5,248.4 L136.4,252.2 L137.3,254.7 L138.2,253.7 L139.1,254.9 L140.0,253.3 L140.9,252.1 L141.8,251.1 L142.7,254.0 L143.6,253.8 L144.5,252.1 L145.4,253.4 L146.3,254.1 L147.2,253.4 L148.1,249.4 L149.0,246.1 L149.9,250.3 L150.8,253.3 L151.7,253.2 L152.6,254.0 L153.5,248.7 L154.4,250.0 L155.3,254.8 L156.2,255.1 L157.1,254.3 L158.0,254.1 L158.9,254.4 L159.8,253.0 L160.7,253.2 L161.6,252.6 L162.5,251.2 L163.4,250.7 L164.3,252.4 L165.2,252.7 L166.1,253.8 L167.0,252.9 L167.9,253.1 L168.8,251.9 L169.7,253.2 L170.6,254.9 L171.5,252.7 L172.4,253.7 L173.3,253.4 L174.2,253.3 L175.1,253.6 L176.0,254.1 L176.9,251.7 L177.8,249.0 L178.7,251.7 L179.6,254.3 L180.5,254.8 L181.4,253.1 L182.3,253.3 L183.2,253.9 L184.1,254.2 L185.0,252.7 L185.9,252.1 L186.8,250.9 L187.7,250.5 L188.6,253.5 L189.5,252.6 L190.4,254.5 L191.3,252.5 L192.2,253.0 L193.1,251.2 L194.0,250.1 L194.9,251.3 L195.8,252.8 L196.7,253.1 L197.6,253.4 L198.5,254.3 L199.4,253.1 L200.3,253.9 L201.2,250.6 L202.1,244.9 L203.0,249.9 L203.9,253.7 L204.8,250.5 L205.7,245.1 L206.6,247.7 L207.5,254.1 L208.4,254.0 L209.3,253.2 L210.2,253.0 L211.1,254.3 L212.0,253.9 L212.9,252.9 L213.8,249.7 L214.7,249.9 L215.6,254.0 L216.5,252.1 L217.4,253.6 L218.3,253.2 L219.2,253.9 L220.1,251.4 L221.0,249.8 L221.9,253.4 L222.8,254.2 L223.7,253.4 L224.6,253.4 L225.5,252.7 L226.4,255.0 L227.3,254.2 L228.2,253.5 L229.1,245.3 L230.0,251.0 L230.9,253.0 L231.8,252.8 L232.7,253.3 L233.6,253.6 L234.5,253.6 L235.4,253.3 L236.3,252.3 L237.2,253.0 L238.1,254.1 L239.0,254.8 L239.9,254.0 L240.8,253.9 L241.7,253.0 L242.6,250.0 L243.5,248.1 L244.4,251.0 L245.3,252.5 L246.2,254.7 L247.1,253.8 L248.0,254.2 L248.9,253.1 L249.8,253.7 L250.7,252.7 L251.6,252.0 L252.5,248.3 L253.4,250.6 L254.3,253.4 L255.2,255.2 L256.1,253.4 L257.0,253.4 L257.9,253.2 L258.8,248.7 L259.7,252.5 L260.6,252.8 L261.5,254.4 L262.4,252.9 L263.3,253.8 L264.2,252.3 L265.1,248.3 L266.0,247.6 L266.9,251.4 L267.8,252.6 L268.7,253.1 L269.6,254.3 L270.5,252.1 L271.4,247.3 L272.3,247.4 L273.2,252.2 L274.1,253.1 L275.0,253.1 L275.9,254.0 L276.8,253.4 L277.7,253.8 L278.6,254.2 L279.5,252.9 L280.4,246.6 L281.3,248.6 L282.2,253.6 L283.1,253.5 L284.0,254.0 L284.9,253.6 L285.8,254.3 L286.7,252.2 L287.6,253.1 L288.5,251.9 L289.4,250.3 L290.3,248.2 L291.2,251.2 L292.1,252.6 L293.0,253.7 L293.9,252.2 L294.8,253.9 L295.7,252.6 L296.6,249.7 L297.5,250.8 L298.4,253.3 L299.3,254.4 L300.2,253.0 L301.1,252.0 L302.0,251.1 L302.9,245.2 L303.8,249.1 L304.7,253.6 L305.6,252.8 L306.5,252.5 L307.4,253.4 L308.3,252.9 L309.2,252.0 L310.1,247.1 L311.0,248.3 L311.9,251.9 L312.8,253.9 L313.7,253.1 L314.6,253.2 L315.5,251.4 L316.4,252.0 L317.3,252.3 L318.2,253.2 L319.1,254.6 L320.0,253.3 L320.9,252.7 L321.8,249.3 L322.7,247.5 L323.6,250.4 L324.5,253.4 L325.4,253.2 L326.3,252.7 L327.2,250.4 L328.1,252.8 L329.0,253.0 L329.9,252.1 L330.8,253.9 L331.7,253.6 L332.6,253.5 L333.5,254.2 L334.4,251.1 L335.3,247.1 L336.2,248.1 L337.1,251.5 L338.0,253.3 L338.9,252.5 L339.8,252.9 L340.7,252.6 L341.6,249.8 L342.5,249.5 L343.4,252.6 L344.3,252.0 L345.2,253.6 L346.1,253.0 L347.0,254.7 L347.9,254.7 L348.8,254.1 L349.7,253.2 L350.6,252.9 L351.5,248.4 L352.4,251.4 L353.3,252.5 L354.2,252.8 L355.1,252.7 L356.0,249.5 L356.9,246.5 L357.8,251.0 L358.7,253.5 L359.6,254.6 L360.5,253.6 L361.4,254.3 L362.3,254.4 L363.2,253.1 L364.1,253.3 L365.0,250.2 L365.9,250.1 L366.8,253.4 L367.7,254.7 L368.6,253.7 L369.5,254.0 L370.4,253.3 L371.3,253.0 L372.2,247.6 L373.1,252.9 L374.0,253.3 L374.9,252.7 L375.8,254.5 L376.7,253.7 L377.6,253.2 L378.5,252.8 L379.4,252.5 L380.3,254.8 L381.2,252.4 L382.1,249.5 L383.0,252.4 L383.9,253.9 L384.8,253.7 L385.7,254.6 L386.6,252.8 L387.5,253.4 L388.4,249.7 L389.3,247.0 L390.2,251.8 L391.1,252.0 L392.0,253.0 L392.9,253.2 L393.8,253.9 L394.7,253.8 L395.6,253.0 L396.5,252.6 L397.4,252.6 L398.3,252.8 L399.2,252.6 L400.1,252.8 L401.0,253.1 L401.9,254.0 L402.8,253.8 L403.7,253.2 L404.6,254.2 L405.5,254.2 L406.4,251.3 L407.3,250.6 L408.2,252.1 L409.1,253.2 L410.0,252.9 L410.9,252.4 L411.8,252.9 L412.7,254.0 L413.6,251.8 L414.5,248.5 L415.4,246.7 L416.3,249.8 L417.2,253.6 L418.1,253.7 L419.0,253.4 L419.9,252.9 L420.8,253.4 L421.7,254.0 L422.6,248.4 L423.5,253.3 L424.4,254.1 L425.3,252.9 L426.2,253.8 L427.1,253.5 L428.0,254.0 L428.9,253.7 L429.8,253.6 L430.7,251.0 L431.6,250.7 L432.5,253.5 L433.4,254.6 L434.3,254.1 L435.2,254.5 L436.1,254.8 L437.0,254.4 L437.9,253.0 L438.8,247.9 L439.7,250.3 L440.6,254.1 L441.5,255.2 L442.4,255.2 L443.3,253.6 L444.2,253.2 L445.1,252.9 L446.0,254.4 L446.9,252.8 L447.8,252.5 L448.7,250.6 L449.6,251.7 L450.5,253.8 L451.4,254.1 L452.3,253.1 L453.2,247.1 L454.1,249.2 L455.0,253.9 L455.9,253.2 L456.8,253.6 L457.7,253.4 L458.6,254.6 L459.5,253.2 L460.4,254.3 L461.3,252.4 L462.2,246.8 L463.1,250.7 L464.0,253.3 L464.9,253.7 L465.8,253.6 L465.8,259.4 L464.9,260.0 L464.0,259.3 L463.1,260.7 L462.2,264.7 L461.3,260.4 L460.4,258.5 L459.5,259.3 L458.6,258.7 L457.7,258.9 L456.8,258.6 L455.9,258.8 L455.0,259.8 L454.1,260.9 L453.2,263.4 L452.3,259.2 L451.4,258.3 L450.5,258.6 L449.6,260.6 L448.7,264.2 L447.8,262.5 L446.9,260.7 L446.0,259.3 L445.1,258.5 L444.2,259.7 L443.3,258.4 L442.4,260.3 L441.5,260.4 L440.6,259.3 L439.7,261.7 L438.8,262.9 L437.9,260.3 L437.0,258.8 L436.1,258.2 L435.2,259.8 L434.3,259.1 L433.4,258.9 L432.5,260.2 L431.6,260.8 L430.7,261.0 L429.8,260.0 L428.9,258.7 L428.0,259.2 L427.1,258.6 L426.2,259.6 L425.3,259.9 L424.4,259.2 L423.5,259.9 L422.6,260.7 L421.7,258.4 L420.8,258.5 L419.9,259.2 L419.0,259.5 L418.1,260.3 L417.2,258.4 L416.3,262.1 L415.4,262.9 L414.5,261.2 L413.6,258.8 L412.7,258.3 L411.8,259.5 L410.9,258.4 L410.0,259.7 L409.1,259.2 L408.2,259.2 L407.3,258.7 L406.4,260.3 L405.5,258.6 L404.6,260.1 L403.7,259.4 L402.8,259.2 L401.9,257.3 L401.0,257.4 L400.1,259.1 L399.2,257.9 L398.3,259.7 L397.4,260.5 L396.5,259.5 L395.6,258.6 L394.7,258.3 L393.8,258.4 L392.9,259.7 L392.0,257.9 L391.1,257.4 L390.2,258.7 L389.3,261.0 L388.4,260.1 L387.5,258.1 L386.6,260.0 L385.7,258.6 L384.8,259.8 L383.9,259.6 L383.0,259.1 L382.1,259.1 L381.2,259.0 L380.3,258.2 L379.4,258.4 L378.5,259.7 L377.6,259.8 L376.7,258.5 L375.8,259.9 L374.9,257.7 L374.0,259.4 L373.1,260.7 L372.2,262.5 L371.3,260.7 L370.4,258.8 L369.5,258.4 L368.6,259.7 L367.7,258.3 L366.8,258.4 L365.9,260.7 L365.0,259.2 L364.1,258.1 L363.2,258.7 L362.3,259.4 L361.4,259.3 L360.5,260.0 L359.6,260.6 L358.7,260.1 L357.8,260.5 L356.9,264.0 L356.0,261.5 L355.1,258.6 L354.2,257.7 L353.3,258.0 L352.4,261.1 L351.5,262.0 L350.6,260.8 L349.7,259.8 L348.8,259.0 L347.9,259.7 L347.0,258.8 L346.1,259.0 L345.2,258.4 L344.3,258.2 L343.4,258.7 L342.5,260.4 L341.6,259.6 L340.7,258.0 L339.8,258.7 L338.9,258.1 L338.0,257.9 L337.1,259.1 L336.2,260.4 L335.3,260.8 L334.4,259.5 L333.5,258.4 L332.6,258.8 L331.7,259.5 L330.8,259.7 L329.9,258.8 L329.0,258.2 L328.1,259.7 L327.2,262.1 L326.3,258.9 L325.4,259.6 L324.5,258.4 L323.6,260.0 L322.7,261.4 L321.8,261.2 L320.9,260.3 L320.0,258.1 L319.1,258.1 L318.2,259.5 L317.3,258.5 L316.4,262.2 L315.5,259.7 L314.6,258.6 L313.7,257.8 L312.8,259.8 L311.9,258.8 L311.0,259.6 L310.1,261.1 L309.2,258.9 L308.3,259.5 L307.4,259.5 L306.5,258.6 L305.6,258.8 L304.7,259.3 L303.8,261.2 L302.9,262.5 L302.0,259.8 L301.1,259.8 L300.2,258.7 L299.3,258.2 L298.4,258.9 L297.5,261.4 L296.6,261.2 L295.7,258.4 L294.8,257.8 L293.9,258.8 L293.0,257.7 L292.1,259.0 L291.2,260.1 L290.3,262.2 L289.4,262.7 L288.5,260.5 L287.6,258.2 L286.7,258.7 L285.8,258.2 L284.9,259.3 L284.0,259.2 L283.1,259.5 L282.2,260.2 L281.3,260.4 L280.4,262.4 L279.5,260.3 L278.6,259.7 L277.7,259.9 L276.8,259.6 L275.9,260.6 L275.0,259.5 L274.1,260.2 L273.2,259.6 L272.3,262.4 L271.4,262.2 L270.5,258.7 L269.6,258.7 L268.7,259.4 L267.8,260.0 L266.9,260.2 L266.0,260.6 L265.1,259.6 L264.2,259.9 L263.3,258.5 L262.4,259.5 L261.5,259.7 L260.6,259.6 L259.7,261.0 L258.8,263.6 L257.9,259.0 L257.0,260.2 L256.1,260.1 L255.2,259.5 L254.3,259.3 L253.4,258.3 L252.5,259.5 L251.6,259.5 L250.7,258.2 L249.8,260.0 L248.9,260.0 L248.0,259.2 L247.1,260.0 L246.2,259.5 L245.3,258.0 L244.4,260.2 L243.5,263.5 L242.6,261.9 L241.7,258.8 L240.8,259.7 L239.9,259.8 L239.0,258.9 L238.1,259.5 L237.2,259.7 L236.3,261.4 L235.4,259.4 L234.5,259.2 L233.6,258.7 L232.7,257.5 L231.8,258.9 L230.9,257.9 L230.0,259.0 L229.1,260.0 L228.2,259.8 L227.3,259.7 L226.4,259.8 L225.5,258.4 L224.6,259.6 L223.7,259.5 L222.8,258.7 L221.9,260.8 L221.0,262.9 L220.1,261.2 L219.2,258.3 L218.3,258.9 L217.4,258.2 L216.5,257.8 L215.6,258.9 L214.7,260.6 L213.8,260.9 L212.9,258.9 L212.0,259.6 L211.1,259.2 L210.2,258.7 L209.3,259.3 L208.4,258.1 L207.5,259.8 L206.6,259.5 L205.7,260.1 L204.8,259.7 L203.9,258.3 L203.0,259.5 L202.1,261.5 L201.2,260.6 L200.3,259.5 L199.4,258.6 L198.5,258.8 L197.6,260.2 L196.7,258.4 L195.8,259.2 L194.9,261.6 L194.0,263.3 L193.1,261.9 L192.2,259.6 L191.3,258.8 L190.4,259.6 L189.5,258.7 L188.6,258.5 L187.7,258.9 L186.8,259.5 L185.9,259.7 L185.0,260.1 L184.1,258.8 L183.2,259.9 L182.3,258.7 L181.4,259.5 L180.5,260.1 L179.6,258.2 L178.7,261.6 L177.8,264.4 L176.9,260.0 L176.0,258.7 L175.1,259.9 L174.2,258.2 L173.3,260.3 L172.4,259.4 L171.5,260.1 L170.6,259.5 L169.7,261.2 L168.8,260.9 L167.9,259.2 L167.0,258.0 L166.1,258.4 L165.2,258.2 L164.3,258.3 L163.4,261.4 L162.5,261.3 L161.6,258.2 L160.7,260.1 L159.8,258.5 L158.9,260.4 L158.0,259.5 L157.1,260.1 L156.2,260.6 L155.3,260.2 L154.4,261.9 L153.5,262.2 L152.6,259.3 L151.7,258.5 L150.8,258.7 L149.9,259.0 L149.0,259.5 L148.1,260.6 L147.2,258.2 L146.3,257.9 L145.4,259.7 L144.5,258.6 L143.6,259.5 L142.7,259.2 L141.8,261.5 L140.9,259.8 L140.0,258.8 L139.1,260.2 L138.2,259.1 L137.3,259.2 L136.4,260.4 L135.5,259.3 L134.6,259.2 L133.7,259.3 L132.8,257.9 L131.9,258.1 L131.0,259.6 L130.1,258.4 L129.2,258.5 L128.3,260.7 L127.4,258.9 L126.5,258.6 L125.6,258.8 L124.7,259.0 L123.8,258.3 L122.9,260.8 L122.0,263.3 L121.1,261.4 L120.2,259.3 L119.3,258.7 L118.4,258.2 L117.5,260.6 L116.6,262.4 L115.7,261.9 L114.8,259.6 L113.9,259.9 L113.0,259.8 L112.1,258.9 L111.2,259.1 L110.3,259.3 L109.4,259.3 L108.5,259.4 L107.6,260.3 L106.7,261.3 L105.8,264.3 L104.9,261.0 L104.0,258.3 L103.1,257.7 L102.2,258.1 L101.3,257.4 L100.4,258.3 L99.5,259.3 L98.6,260.2 L97.7,261.0 L96.8,260.6 L95.9,259.9 L95.0,258.6 L94.1,258.7 L93.2,260.8 L92.3,259.5 L91.4,258.7 L90.5,258.7 L89.6,260.0 L88.7,259.8 L87.8,260.0 L86.9,258.9 L86.0,259.5 L85.1,260.0 L84.2,259.2 L83.3,259.3 L82.4,260.7 L81.5,263.1 L80.6,265.4 L79.7,262.3 L78.8,258.9 L77.9,258.8 L77.0,259.1 L76.1,259.2 L75.2,259.4 L74.3,261.3 L73.4,260.6 L72.5,258.3 L71.6,259.1 L70.7,259.9 L69.8,258.0 L68.9,259.6 L68.0,258.0 L67.1,258.6 L66.2,258.0 L65.3,260.3 L64.4,261.5 L63.5,260.2 L62.6,257.5 L61.7,257.7 L60.8,259.2 L59.9,259.0 L59.0,259.7 L58.1,262.5 L57.2,260.7 L56.3,258.2 L55.4,259.5 L54.5,258.8 L53.6,258.7 L52.7,258.5 L51.8,258.4 L50.9,260.8 L50.0,263.2 L49.1,261.8 L48.2,260.6 L47.3,259.4 L46.4,259.3 L45.5,259.0 L44.6,258.7 L43.7,258.6 L42.8,259.8 L41.9,260.6 L41.0,260.9 L40.1,259.3 L39.2,259.6 L38.3,259.9 L37.4,259.5 L36.5,259.0 L35.6,259.4 L34.7,260.8 L33.8,263.0 L32.9,260.2 L32.0,258.9 L31.1,259.7 L30.2,260.1 L29.3,258.2 L28.4,259.2 L27.5,259.6 L26.6,262.5 L25.7,263.7 L24.8,258.7 L23.9,259.5Z" fill="#12f412"/>
<path d="M196 72.3H193.7V83.4H196M294.5 72.3H296.8V83.4H294.5" stroke="#d8d8d8" stroke-width="1" fill="none"/>
<path d="M193.8 78.0 L196.6 75.9 L200.6 79.6 L204.6 75.9" stroke="#d0d0d0" stroke-width="0.95" fill="none"/>
<path d="M204.6 75.9 L208.6 79.6 L212.6 75.9 L216.6 79.6 L220.6 75.9 L224.6 79.6 L228.6 75.9 L232.6 79.6 L236.6 75.9 L240.6 79.6 L244.6 75.9 L248.6 79.6 L252.6 75.9 L256.6 79.6 L260.6 75.9 L264.6 79.6 L268.6 75.9 L272.6 79.6 L276.6 75.9 L280.6 79.6 L284.6 75.9" stroke="#24b824" stroke-width="0.95" fill="none"/>
<path d="M284.6 75.9 L288.6 79.6 L292.6 75.9 L296.5 78.0" stroke="#d0d0d0" stroke-width="0.95" fill="none"/>
<path d="M241 90 L250 90 Q250.6 90 250.6 90.8 L250.6 96 L245.5 100.6 L240.4 96 L240.4 90.8 Q240.4 90 241 90 Z" fill="#f6a444"/>
<path d="M8 258.3 L17 258.3 L21.6 264 L17 269.8 L8 269.8 Z" fill="#22e422"/>
<path d="M483 260.6 L474.5 260.6 L469.8 265.2 L474.5 269.9 L483 269.9 Z" fill="#22e422"/>
<path d="M409 82.3 H412.6 V71.5 H416.2 M410.6 78.4 L412.6 75.2 L414.6 78.4" stroke="#22e422" stroke-width="1.1" fill="none"/>
<path d="M32 449.5 q1.6 -3.4 3.2 0 q1.6 3.4 3.2 0" stroke="#22e422" stroke-width="0.9" fill="none"/>
</svg>
<span class="t" style="left:243.60px;top:89.44px;font-size:6.8px;transform:scaleX(0.9161);color:#6a3000;font-weight:bold;">T</span>
<span class="t" style="left:11.50px;top:258.65px;font-size:8.5px;transform:scaleX(0.6995);color:#0a5a0a;font-weight:bold;">1</span>
<span class="t" style="left:476.50px;top:260.00px;font-size:7.5px;transform:scaleX(0.9836);color:#0a5a0a;font-weight:bold;">T</span>
<span class="t" style="left:78.90px;top:403.53px;font-size:10.6px;transform:scaleX(0.8981);color:#20c420;">CH1:Vpp = 6.88mV</span>
<span class="t" style="left:300.20px;top:403.53px;font-size:10.6px;transform:scaleX(0.9268);color:#20c420;">CH1:Vamp = 4.38mV</span>

<div class="grp" style="left:488.5px;top:72px;width:145px;height:80px"></div>
<div class="grp" style="left:488.5px;top:162px;width:145px;height:176px"></div>
<div class="grp" style="left:488.5px;top:349px;width:145px;height:109px"></div>
<div class="abs" style="left:538px;top:68px;width:46px;height:10px;background:#f0f0f4"></div>
<div class="abs" style="left:543px;top:158px;width:37px;height:10px;background:#f0f0f4"></div>
<div class="abs" style="left:544px;top:345px;width:34px;height:10px;background:#f0f0f4"></div>
<div class="chk" style="left:494.3px;top:171.4px"><svg width="8" height="8" style="position:absolute;left:0;top:0"><path d="M1.2 4 L3.2 6.2 L7 1.5" fill="none" stroke="#2a9a2a" stroke-width="1.6"/></svg></div>
<div class="chk" style="left:494.3px;top:257.2px"></div>

<span class="t" style="left:541.90px;top:66.28px;font-size:9px;transform:scaleX(0.9407);color:#4a6ab8;">Horizontal</span>
<span class="t" style="left:546.90px;top:155.88px;font-size:9px;color:#4a6ab8;">Vertical</span>
<span class="t" style="left:547.70px;top:342.08px;font-size:9px;transform:scaleX(0.9336);color:#4a6ab8;">Trigger</span>
<span class="t" style="left:496.50px;top:77.78px;font-size:9px;transform:scaleX(0.8941);color:#222;">Time / DIV</span>
<span class="t" style="left:497.00px;top:114.88px;font-size:9px;transform:scaleX(0.9233);color:#222;">Format</span>
<span class="t" style="left:508.20px;top:170.58px;font-size:9px;transform:scaleX(0.8000);color:#222;">CH1</span>
<span class="t" style="left:507.80px;top:256.48px;font-size:9px;transform:scaleX(0.8222);color:#222;">CH2</span>
<span class="t" style="left:494.80px;top:365.38px;font-size:9px;transform:scaleX(0.9344);color:#222;">Trigger Mode</span>
<span class="t" style="left:494.80px;top:389.18px;font-size:9px;transform:scaleX(0.9796);color:#222;">Trigger Sweep</span>
<span class="t" style="left:494.80px;top:412.68px;font-size:9px;transform:scaleX(0.9632);color:#222;">Trigger Source</span>
<span class="t" style="left:494.80px;top:436.48px;font-size:9px;transform:scaleX(0.9425);color:#222;">Trigger Slope</span>
<div class="combo " style="left:494.7px;top:92.2px;width:49px;height:16px"><span class="cb"><svg width="9" height="6" viewBox="0 0 9 6"><path d="M1.5 1 L4.5 4 L7.5 1" fill="none" stroke-width="1.8"/></svg></span></div>
<div class="combo " style="left:494.7px;top:128.8px;width:49px;height:16.3px"><span class="cb"><svg width="9" height="6" viewBox="0 0 9 6"><path d="M1.5 1 L4.5 4 L7.5 1" fill="none" stroke-width="1.8"/></svg></span></div>
<div class="combo " style="left:494.6px;top:186.1px;width:47.5px;height:16.2px"><span class="cb"><svg width="9" height="6" viewBox="0 0 9 6"><path d="M1.5 1 L4.5 4 L7.5 1" fill="none" stroke-width="1.8"/></svg></span></div>
<div class="combo " style="left:494.6px;top:208.6px;width:47.4px;height:16.5px"><span class="cb"><svg width="9" height="6" viewBox="0 0 9 6"><path d="M1.5 1 L4.5 4 L7.5 1" fill="none" stroke-width="1.8"/></svg></span></div>
<div class="combo " style="left:494.6px;top:231px;width:47.4px;height:16.5px"><span class="cb"><svg width="9" height="6" viewBox="0 0 9 6"><path d="M1.5 1 L4.5 4 L7.5 1" fill="none" stroke-width="1.8"/></svg></span></div>
<div class="combo dis" style="left:494.6px;top:271px;width:47.4px;height:16.4px"><span class="cb"><svg width="9" height="6" viewBox="0 0 9 6"><path d="M1.5 1 L4.5 4 L7.5 1" fill="none" stroke-width="1.8"/></svg></span></div>
<div class="combo dis" style="left:494.6px;top:293.2px;width:47.4px;height:16.4px"><span class="cb"><svg width="9" height="6" viewBox="0 0 9 6"><path d="M1.5 1 L4.5 4 L7.5 1" fill="none" stroke-width="1.8"/></svg></span></div>
<div class="combo dis" style="left:494.6px;top:315.5px;width:47.4px;height:16.6px"><span class="cb"><svg width="9" height="6" viewBox="0 0 9 6"><path d="M1.5 1 L4.5 4 L7.5 1" fill="none" stroke-width="1.8"/></svg></span></div>
<div class="combo " style="left:568.8px;top:363.4px;width:49px;height:17px"><span class="cb"><svg width="9" height="6" viewBox="0 0 9 6"><path d="M1.5 1 L4.5 4 L7.5 1" fill="none" stroke-width="1.8"/></svg></span></div>
<div class="combo " style="left:568.8px;top:387.8px;width:49px;height:17px"><span class="cb"><svg width="9" height="6" viewBox="0 0 9 6"><path d="M1.5 1 L4.5 4 L7.5 1" fill="none" stroke-width="1.8"/></svg></span></div>
<div class="combo " style="left:568.8px;top:411px;width:49px;height:16.8px"><span class="cb"><svg width="9" height="6" viewBox="0 0 9 6"><path d="M1.5 1 L4.5 4 L7.5 1" fill="none" stroke-width="1.8"/></svg></span></div>
<div class="combo " style="left:568.8px;top:435px;width:49px;height:16.8px"><span class="cb"><svg width="9" height="6" viewBox="0 0 9 6"><path d="M1.5 1 L4.5 4 L7.5 1" fill="none" stroke-width="1.8"/></svg></span></div>
<div class="abs" style="left:496.7px;top:233.3px;width:29.6px;height:12.2px;background:#2c52b0"></div>
<span class="t" style="left:497.90px;top:93.68px;font-size:9px;transform:scaleX(0.9503);color:#111;">40.0us</span>
<span class="t" style="left:497.90px;top:131.18px;font-size:9px;transform:scaleX(0.9859);color:#111;">Y - T</span>
<span class="t" style="left:498.20px;top:188.58px;font-size:9px;transform:scaleX(0.9289);color:#111;">10.0mV</span>
<span class="t" style="left:498.40px;top:210.78px;font-size:9px;transform:scaleX(0.8553);color:#111;">AC</span>
<span class="t" style="left:498.40px;top:233.28px;font-size:9px;transform:scaleX(0.8489);color:#fff;">x 1</span>
<span class="t" style="left:498.40px;top:273.28px;font-size:9px;transform:scaleX(0.8498);color:#b4b4ba;">1.00V</span>
<span class="t" style="left:498.40px;top:295.28px;font-size:9px;transform:scaleX(0.8553);color:#b4b4ba;">AC</span>
<span class="t" style="left:498.40px;top:317.68px;font-size:9px;transform:scaleX(0.8489);color:#b4b4ba;">x 1</span>
<span class="t" style="left:572.70px;top:365.68px;font-size:9px;transform:scaleX(0.8756);color:#111;">Edge</span>
<span class="t" style="left:572.70px;top:389.68px;font-size:9px;transform:scaleX(0.9300);color:#111;">Auto</span>
<span class="t" style="left:572.70px;top:412.98px;font-size:9px;transform:scaleX(0.8167);color:#111;">CH1</span>
<span class="t" style="left:572.70px;top:437.18px;font-size:9px;transform:scaleX(0.6648);color:#111;">+</span>
<svg class="abs" style="left:540px;top:70px" width="100" height="270" viewBox="540 70 100 270">
<g>
<ellipse cx="591.6" cy="112.7" rx="29.6" ry="27.7" fill="#dedee0" stroke="#606060" stroke-width="1"/>
<ellipse cx="591.6" cy="113.0" rx="27.2" ry="25.5" fill="#bcbcbe" stroke="#6a6a6a" stroke-width="1"/>
<path d="M566.8000000000001 137.7L575.1 130.2M616.3000000000001 137.7L610.4 132.0" stroke="#3a3a3a" stroke-width="1.15"/>
<ellipse cx="591.7" cy="113.9" rx="22.4" ry="21.6" fill="#2a2cf6" stroke="#3c3c40" stroke-width="1"/>
<path d="M595.6 110.5L606 102.9" stroke="#fff" stroke-width="1.6" stroke-linecap="round"/>
</g>
<g>
<ellipse cx="591.6" cy="213.8" rx="29.6" ry="27.7" fill="#dedee0" stroke="#606060" stroke-width="1"/>
<ellipse cx="591.6" cy="214.10000000000002" rx="27.2" ry="25.5" fill="#bcbcbe" stroke="#6a6a6a" stroke-width="1"/>
<path d="M566.8000000000001 238.8L575.1 231.3M616.3000000000001 238.8L610.4 233.10000000000002" stroke="#3a3a3a" stroke-width="1.15"/>
<ellipse cx="591.7" cy="215.0" rx="22.4" ry="21.6" fill="#12f012" stroke="#3c3c40" stroke-width="1"/>
<path d="M594.5 219L602.3 228.5" stroke="#fff" stroke-width="1.6" stroke-linecap="round"/>
</g>
<g>
<ellipse cx="591.6" cy="297.4" rx="29.6" ry="27.7" fill="#dedee0" stroke="#606060" stroke-width="1"/>
<ellipse cx="591.6" cy="297.7" rx="27.2" ry="25.5" fill="#bcbcbe" stroke="#6a6a6a" stroke-width="1"/>
<path d="M566.8000000000001 322.4L575.1 314.9M616.3000000000001 322.4L610.4 316.7" stroke="#3a3a3a" stroke-width="1.15"/>
<ellipse cx="591.7" cy="298.59999999999997" rx="22.4" ry="21.6" fill="#8e8e8e" stroke="#3c3c40" stroke-width="1"/>
<path d="M575 291.4L586.5 296.1" stroke="#fff" stroke-width="1.6" stroke-linecap="round"/>
</g>
</svg>

<div class="abs" style="left:3px;top:460px;width:633px;height:1px;background:#d4d4dc"></div>
<div class="abs" style="left:532.5px;top:463px;width:1px;height:12px;background:#e0e0e6"></div>

<span class="t" style="left:5.20px;top:464.18px;font-size:9px;transform:scaleX(0.9284);color:#222;">Connected</span>
<span class="t" style="left:538.30px;top:464.18px;font-size:9px;transform:scaleX(0.9810);color:#222;">03-03-2011</span>
<span class="t" style="left:589.50px;top:464.18px;font-size:9px;transform:scaleX(0.9282);color:#222;">11:15</span>
</body></html>
